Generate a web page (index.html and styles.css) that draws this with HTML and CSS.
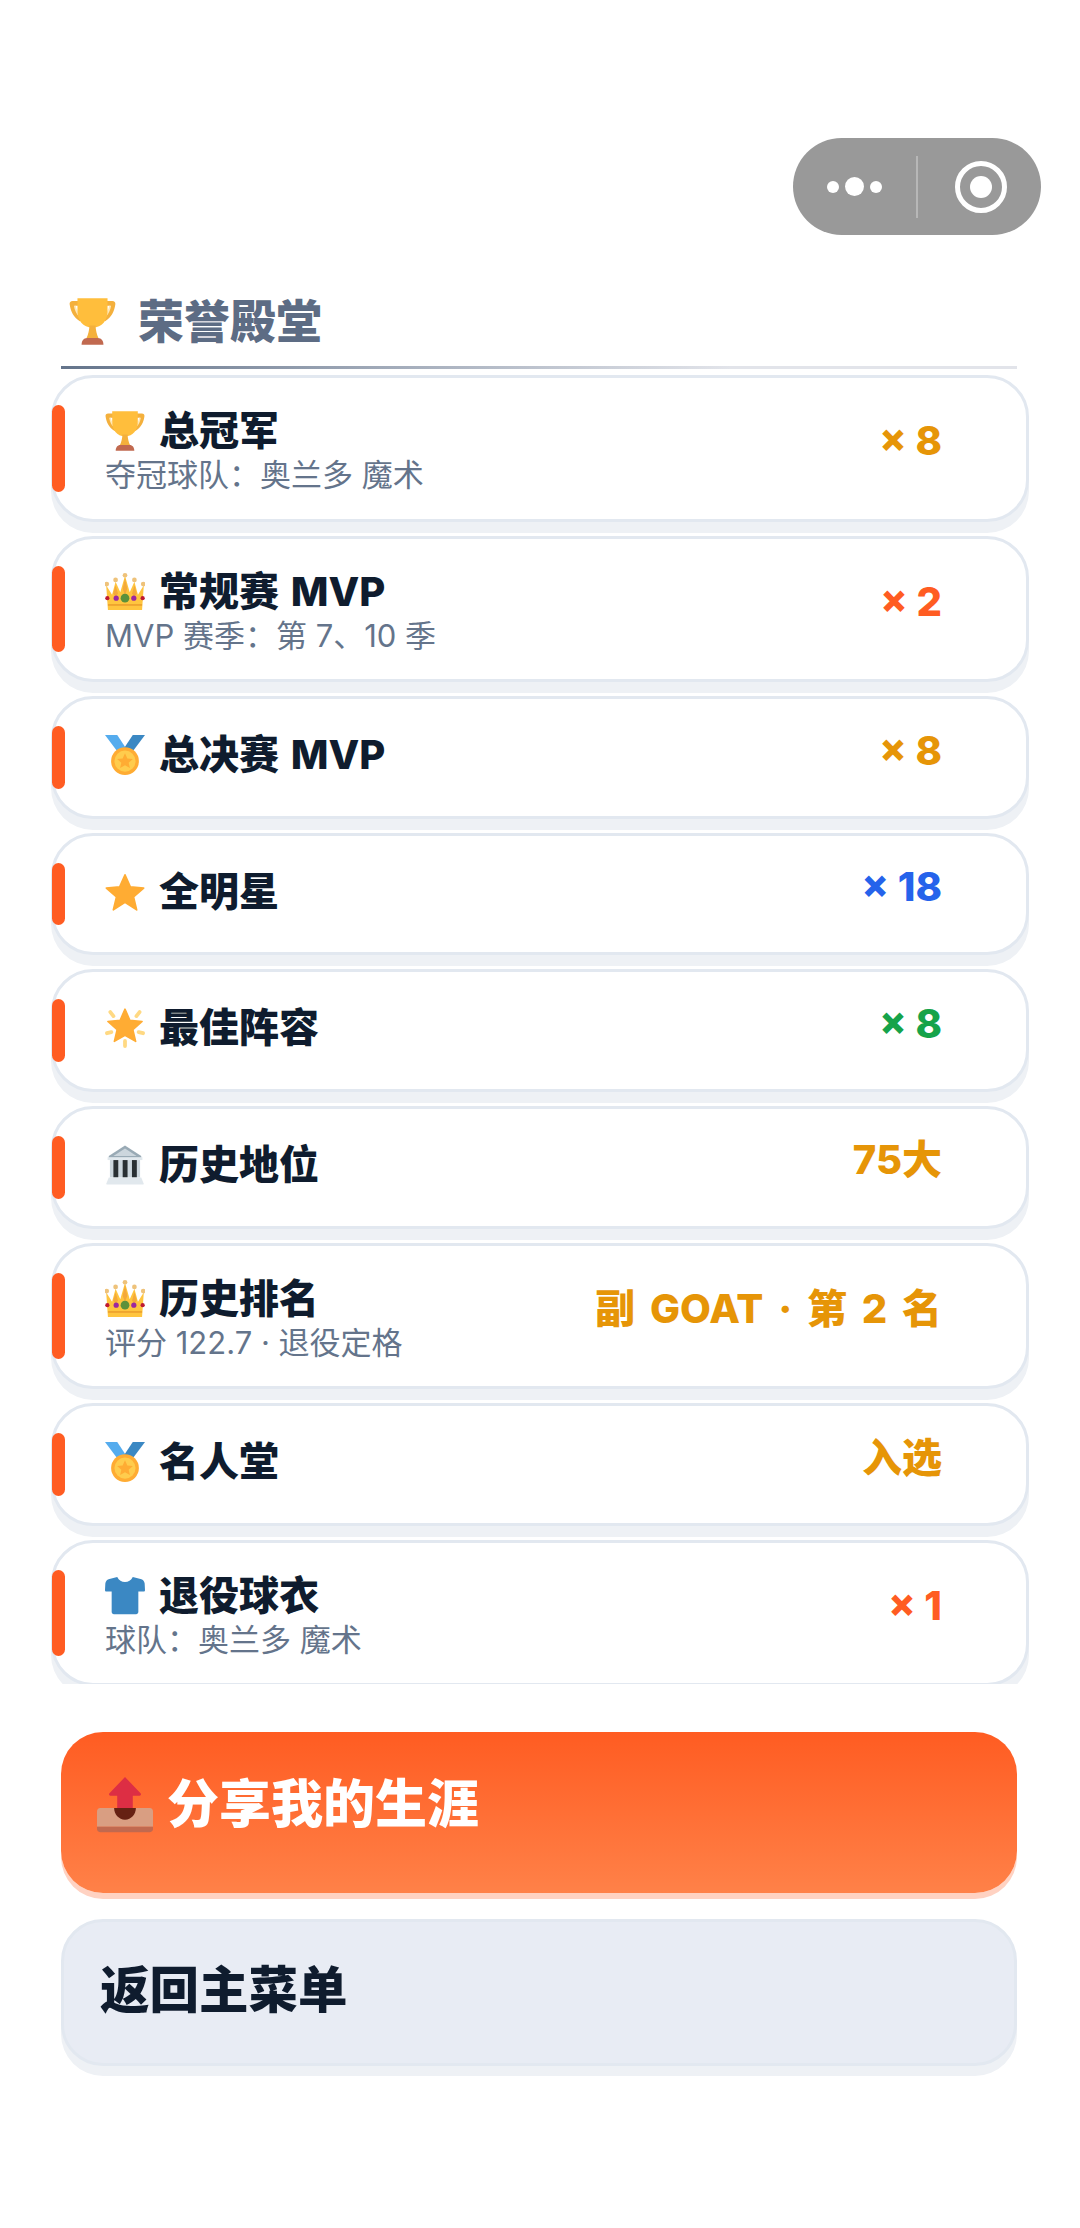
FILE: index.html
```html
<!DOCTYPE html>
<html lang="zh-CN">
<head>
  <meta charset="UTF-8">
  <meta name="viewport" content="width=device-width, initial-scale=1.0">
  <title>荣誉殿堂</title>
  <link rel="stylesheet" href="styles.css">
</head>
<body>
  <!-- Emoji drawn as symbols, reused through <use> -->
  <svg class="sprites" xmlns="http://www.w3.org/2000/svg">
    <symbol id="i-trophy" viewBox="0.8 0.8 34.400 34.400">
      <path d="M8 3H3.500C2 3 1 4 1.300 5.600c.8 5 2.600 9.400 7.700 12.400l2-3C7.500 13 5.800 10 5 6.500h3z" fill="#f4b03c"/>
      <path d="M28 3h4.500C34 3 35 4 34.700 5.600c-.8 5-2.600 9.400-7.700 12.400l-2-3c3.500-2 5.200-5 6-8.500h-3z" fill="#f4b03c"/>
      <path d="M4.400 6.500h1.300c.6 2.700 1.800 5 3.300 6.800l-.8 1.200c-2-2-3.300-4.800-3.800-8z" fill="#ffe8b6"/>
      <path d="M31.600 6.500h-1.300c-.6 2.700-1.800 5-3.300 6.800l.8 1.200c2-2 3.300-4.800 3.800-8z" fill="#ffe8b6"/>
      <path d="M7 1h22v9c0 7-3.800 12.500-11 12.500S7 17 7 10z" fill="#ffbe3c"/>
      <path d="M15.800 21h4.400c.2 3.500.9 6.500 2.300 9.500h-9c1.400-3 2.100-6 2.300-9.500z" fill="#f4b03c"/>
      <path d="M10 35c0-3 1.600-5 4-5h8c2.400 0 4 2 4 5z" fill="#c1694f"/>
    </symbol>
    <symbol id="i-crown" viewBox="1 1.500 34 32.500">
      <path d="M2 12l5 8 3-11 4 9 4-14 4 14 4-9 3 11 5-8-1.500 21h-29z" fill="#ffc53f"/>
      <g fill="#f4a93a">
        <path d="M18 6l2 9-2 5-2-5z"/><path d="M10 12l2 7-2 3-2-3z"/><path d="M26 12l2 7-2 3-2-3z"/>
      </g>
      <g fill="#eec27a">
        <circle cx="2.500" cy="11" r="2"/><circle cx="10" cy="7.500" r="2"/><circle cx="18" cy="3.500" r="2"/><circle cx="26" cy="7.500" r="2"/><circle cx="33.500" cy="11" r="2"/>
      </g>
      <rect x="3.500" y="28" width="29" height="1.500" fill="#eda32e"/>
      <circle cx="18" cy="23" r="3.700" fill="#5c913b"/>
      <circle cx="10.500" cy="23" r="2.200" fill="#9c27a0"/>
      <circle cx="25.500" cy="23" r="2.200" fill="#9c27a0"/>
      <circle cx="3" cy="23" r="1.800" fill="#be1931"/>
      <circle cx="33" cy="23" r="1.800" fill="#be1931"/>
    </symbol>
    <symbol id="i-medal" viewBox="0 0 36 36">
      <path d="M0 0h11l10 15-6 5z" fill="#55acee"/>
      <path d="M36 0H25L15 15l6 5z" fill="#3b88c3"/>
      <circle cx="18" cy="23.500" r="12.500" fill="#ffac33"/>
      <circle cx="18" cy="23.500" r="9.500" fill="#ffcc4d"/>
      <path d="M18 16.500l2.100 4.600 5 .5-3.800 3.300 1.100 4.900-4.400-2.600-4.400 2.600 1.100-4.900-3.800-3.300 5-.5z" fill="#ffac33"/>
    </symbol>
    <symbol id="i-star" viewBox="0 0 36 36">
      <path d="M18 2.500l4.800 10.900 12 1.100-9.100 7.900 2.800 11.700L18 27.200 7.500 34.100l2.800-11.700-9.100-7.900 12-1.100z" fill="#ffac33" stroke="#ffac33" stroke-width="1.500" stroke-linejoin="round"/>
    </symbol>
    <symbol id="i-glow" viewBox="0 0 36 36">
      <g fill="#ffd983">
        <rect x="4.500" y="1.500" width="3.400" height="8" rx="1.700" transform="rotate(-38 6.200 5.500)"/>
        <rect x="28" y="1.500" width="3.400" height="8" rx="1.700" transform="rotate(38 29.700 5.500)"/>
        <rect x="0" y="20.500" width="7.500" height="3.400" rx="1.700" transform="rotate(-14 3.700 22.200)"/>
        <rect x="28.500" y="20.500" width="7.500" height="3.400" rx="1.700" transform="rotate(14 32.300 22.200)"/>
        <rect x="16.300" y="28" width="3.400" height="8" rx="1.700"/>
      </g>
      <path d="M18 1l4.400 10 11 1.100-8.300 7.300 2.500 10.700L18 24.500l-9.600 5.600 2.500-10.700-8.300-7.300 11-1.100z" fill="#ffac33" stroke="#ffac33" stroke-width="1.400" stroke-linejoin="round"/>
    </symbol>
    <symbol id="i-bank" viewBox="1 0.500 34 34.500">
      <path d="M18 1L32 10v2H4v-2z" fill="#99aab5"/>
      <path d="M18 3.500L28 10H8z" fill="#ccd6dd"/>
      <rect x="3" y="11" width="30" height="2.500" fill="#e1e8ed"/>
      <rect x="5" y="13.500" width="26" height="15" fill="#ccd6dd"/>
      <rect x="8" y="13.500" width="4.200" height="15" fill="#292f33"/>
      <rect x="16" y="13.500" width="4.200" height="15" fill="#292f33"/>
      <rect x="24" y="13.500" width="4.200" height="15" fill="#292f33"/>
      <path d="M4 28.500h28l2 5v1H2v-1z" fill="#e1e8ed"/>
    </symbol>
    <symbol id="i-shirt" viewBox="0 0 36 36">
      <path d="M11 1c1.500 3 4 4.500 7 4.500S23.500 4 25 1l7 1.800c2 .5 3.500 2 3.700 4l.3 6c0 .8-.5 1.200-1.200 1.200H30v18.500c0 1.100-.9 2-2 2H8c-1.100 0-2-.9-2-2V14H1.200C.5 14 0 13.600 0 12.800l.3-6c.2-2 1.700-3.500 3.700-4z" fill="#3b88c3"/>
    </symbol>
    <symbol id="i-outbox" viewBox="0 0 36 36">
      <path d="M18 0l10 10.500c.5.500.2 1.500-.6 1.500H23v8c0 1.100-.9 2-2 2h-6c-1.100 0-2-.9-2-2v-8H8.600c-.8 0-1.100-1-.6-1.500z" fill="#dd2e44"/>
      <path d="M2 20h32c1.100 0 2 .9 2 2v10H0V22c0-1.100.9-2 2-2z" fill="#d99e82"/>
      <path d="M11 20h14c0 4-3 7.500-7 7.500S11 24 11 20z" fill="#662113"/>
      <path d="M0 32h36v1.500c0 1.100-.9 2-2 2H2c-1.100 0-2-.9-2-2z" fill="#c1694f"/>
    </symbol>
  </svg>

  <div class="page">
    <!-- Capsule du mini-programme -->
    <div class="capsule-row">
      <div class="capsule">
        <div class="capsule-dots">
          <span class="dot"></span><span class="dot dot-big"></span><span class="dot"></span>
        </div>
        <span class="capsule-line"></span>
        <div class="capsule-target"><span></span></div>
      </div>
    </div>

    <h2 class="section-title">
      <svg class="section-icon"><use href="#i-trophy"/></svg>
      <span>荣誉殿堂</span>
    </h2>

    <div class="honor-list">
      <div class="honor-card">
        <div class="honor-info">
          <div class="honor-name"><svg class="honor-icon"><use href="#i-trophy"/></svg>总冠军</div>
          <div class="honor-sub">夺冠球队：奥兰多 魔术</div>
        </div>
        <div class="honor-value gold">× 8</div>
      </div>
      <div class="honor-card">
        <div class="honor-info">
          <div class="honor-name"><svg class="honor-icon"><use href="#i-crown"/></svg>常规赛 MVP</div>
          <div class="honor-sub">MVP 赛季：第 7、10 季</div>
        </div>
        <div class="honor-value orange">× 2</div>
      </div>
      <div class="honor-card">
        <div class="honor-info">
          <div class="honor-name"><svg class="honor-icon"><use href="#i-medal"/></svg>总决赛 MVP</div>
        </div>
        <div class="honor-value gold">× 8</div>
      </div>
      <div class="honor-card">
        <div class="honor-info">
          <div class="honor-name"><svg class="honor-icon"><use href="#i-star"/></svg>全明星</div>
        </div>
        <div class="honor-value blue">× 18</div>
      </div>
      <div class="honor-card">
        <div class="honor-info">
          <div class="honor-name"><svg class="honor-icon"><use href="#i-glow"/></svg>最佳阵容</div>
        </div>
        <div class="honor-value green">× 8</div>
      </div>
      <div class="honor-card">
        <div class="honor-info">
          <div class="honor-name"><svg class="honor-icon"><use href="#i-bank"/></svg>历史地位</div>
        </div>
        <div class="honor-value gold">75大</div>
      </div>
      <div class="honor-card">
        <div class="honor-info">
          <div class="honor-name"><svg class="honor-icon"><use href="#i-crown"/></svg>历史排名</div>
          <div class="honor-sub">评分 122.7 · 退役定格</div>
        </div>
        <div class="honor-value gold spaced">副 GOAT · 第 2 名</div>
      </div>
      <div class="honor-card">
        <div class="honor-info">
          <div class="honor-name"><svg class="honor-icon"><use href="#i-medal"/></svg>名人堂</div>
        </div>
        <div class="honor-value gold">入选</div>
      </div>
      <div class="honor-card">
        <div class="honor-info">
          <div class="honor-name"><svg class="honor-icon"><use href="#i-shirt"/></svg>退役球衣</div>
          <div class="honor-sub">球队：奥兰多 魔术</div>
        </div>
        <div class="honor-value orange">× 1</div>
      </div>
    </div>

    <div class="actions">
      <button class="btn btn-share"><svg class="btn-icon"><use href="#i-outbox"/></svg>分享我的生涯</button>
      <button class="btn btn-back">返回主菜单</button>
    </div>
  </div>
</body>
</html>
```

FILE: styles.css
```css
:root {
  --ink: #0f1c2e;
  --slate: #64748b;
  --line: #e2e8f0;
  --lift: #eef1f5;
  --orange: #ff5c22;
  --gold: #e69507;
  --blue: #2563eb;
  --green: #16a34a;
}

* {
  margin: 0;
  padding: 0;
  box-sizing: border-box;
}

body {
  font-family: Inter, "Noto Sans CJK SC", sans-serif;
  background: #fff;
  color: var(--ink);
}

.sprites {
  display: none;
}

.page {
  width: 1080px;
  height: 2228px;
  overflow: hidden;
}

/* capsule */
.capsule-row {
  display: flex;
  justify-content: flex-end;
  padding: 138px 39px 0 0;
}

.capsule {
  width: 248px;
  height: 97px;
  border-radius: 49px;
  background: #999;
  display: flex;
  align-items: center;
}

.capsule-dots {
  width: 123px;
  padding-left: 34px;
  display: flex;
  align-items: center;
  gap: 6px;
}

.dot {
  width: 12px;
  height: 12px;
  border-radius: 50%;
  background: #fff;
}

.dot-big {
  width: 19px;
  height: 19px;
}

.capsule-line {
  width: 2px;
  height: 62px;
  background: rgba(255, 255, 255, 0.3);
}

.capsule-target {
  width: 52px;
  height: 52px;
  margin-left: 37px;
  border: 5px solid #fff;
  border-radius: 50%;
  display: flex;
  align-items: center;
  justify-content: center;
}

.capsule-target span {
  width: 22px;
  height: 22px;
  border-radius: 50%;
  background: #fff;
}

/* section title */
.section-title {
  margin: 0 63px 0 61px;
  padding: 56px 0 17px 8px;
  height: 134px;
  display: flex;
  align-items: center;
  gap: 22px;
  font-size: 46px;
  font-weight: 900;
  line-height: 61px;
  color: #5d6c84;
  position: relative;
}

.section-title::after {
  content: "";
  position: absolute;
  left: 0;
  right: 0;
  bottom: 0;
  height: 3px;
  background: linear-gradient(90deg, #64748b 0%, #e2e4ea 70%);
}

.section-icon {
  width: 47px;
  height: 47px;
}

/* honor cards */
.honor-list {
  margin: 6px 51px 0;
  height: 1309px;
  overflow: hidden;
}

.honor-card {
  position: relative;
  display: flex;
  align-items: center;
  justify-content: space-between;
  margin-bottom: 14px;
  padding: 23px 84px 32px 51px;
  border: 3px solid var(--line);
  border-radius: 42px;
  background: #fff;
  box-shadow: 0 11px 0 var(--lift);
}

.honor-card::before {
  content: "";
  position: absolute;
  left: -2px;
  top: 27px;
  bottom: 27px;
  width: 13px;
  border-radius: 7px;
  background: var(--orange);
}

.honor-info {
  min-height: 61.6px;
  display: flex;
  flex-direction: column;
  justify-content: center;
}

.honor-name {
  display: flex;
  align-items: center;
  gap: 14px;
  height: 56px;
  padding-top: 4px;
  font-size: 40px;
  font-weight: 800;
  line-height: 50px;
  word-spacing: 3px;
}

.honor-icon {
  width: 40px;
  height: 40px;
  flex-shrink: 0;
}

.honor-sub {
  font-size: 31px;
  line-height: 36px;
  margin-bottom: -6.400px;
  color: var(--slate);
}

.honor-value {
  margin-bottom: 5px;
  font-size: 40px;
  font-weight: 800;
  line-height: 54px;
}

.spaced {
  word-spacing: 6px;
}

.gold { color: var(--gold); }
.orange { color: var(--orange); }
.blue { color: var(--blue); }
.green { color: var(--green); }

/* buttons */
.actions {
  margin: 48px 63px 0 61px;
  display: flex;
  flex-direction: column;
  gap: 26px;
}

.btn {
  display: flex;
  align-items: center;
  border: none;
  border-radius: 42px;
  font-family: inherit;
  font-weight: 900;
  text-align: left;
}

.btn-share {
  height: 161px;
  padding: 42px 36px 57px;
  gap: 14px;
  font-size: 52px;
  line-height: 62px;
  color: #fff;
  background: linear-gradient(180deg, #ff5c22 0%, #ff8148 100%);
  box-shadow: 0 6px 0 #ffd2c2;
}

.btn-icon {
  width: 56px;
  height: 56px;
}

.btn-back {
  height: 147px;
  padding: 40px 36px 46px;
  font-size: 49.500px;
  line-height: 60px;
  color: var(--ink);
  background: #e8ecf4;
  border: 3px solid var(--line);
  box-shadow: 0 10px 0 var(--lift);
}
```
